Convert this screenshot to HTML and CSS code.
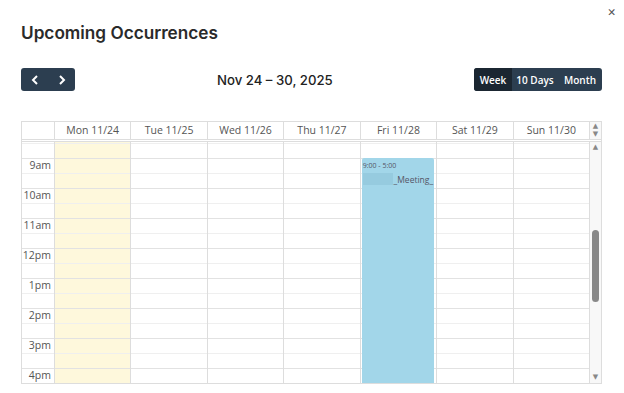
FILE: index.html
```html
<!DOCTYPE html>
<html>
<head lang="en">
    <meta charset="UTF-8">
    <title>Upcoming Occurrences</title>
    <link rel="stylesheet" href="styles.css">
</head>
<body>
    <div id="modal">
        <span id="close">&#x2715;</span>
        <h1 id="title">Upcoming Occurrences</h1>
        <div id="toolbar">
            <div class="btn-group">
                <span class="btn nav">
                    <svg width="8" height="10" viewBox="0 0 8 10"><path d="M6 1 L2 5 L6 9" fill="none" stroke="#fff" stroke-width="2"/></svg>
                </span>
                <span class="btn nav">
                    <svg width="8" height="10" viewBox="0 0 8 10"><path d="M2 1 L6 5 L2 9" fill="none" stroke="#fff" stroke-width="2"/></svg>
                </span>
            </div>
            <h2 id="range">Nov 24 &ndash; 30, 2025</h2>
            <div class="btn-group views">
                <span class="btn view active">Week</span>
                <span class="btn view">10 Days</span>
                <span class="btn view">Month</span>
            </div>
        </div>
        <div id="calendar">
            <div class="cal-head">
                <div class="head-cell"></div>
                <div class="head-cell">Mon 11/24</div>
                <div class="head-cell">Tue 11/25</div>
                <div class="head-cell">Wed 11/26</div>
                <div class="head-cell">Thu 11/27</div>
                <div class="head-cell">Fri 11/28</div>
                <div class="head-cell">Sat 11/29</div>
                <div class="head-cell">Sun 11/30</div>
                <div class="head-scroll">
                    <span class="arrow">&#9650;</span>
                    <span class="arrow">&#9660;</span>
                </div>
            </div>
            <div class="cal-body">
                <div class="col times">
                    <div class="time">9am</div>
                    <div class="time">10am</div>
                    <div class="time">11am</div>
                    <div class="time">12pm</div>
                    <div class="time">1pm</div>
                    <div class="time">2pm</div>
                    <div class="time">3pm</div>
                    <div class="time">4pm</div>
                </div>
                <div class="col day today"></div>
                <div class="col day"></div>
                <div class="col day"></div>
                <div class="col day"></div>
                <div class="col day">
                    <div class="event">
                        <div class="event-time">9:00 - 5:00</div>
                        <div class="event-title"><span class="blur"></span>_Meeting_</div>
                    </div>
                </div>
                <div class="col day"></div>
                <div class="col day"></div>
                <div class="scrollbar">
                    <span class="arrow">&#9650;</span>
                    <div class="track"><div class="thumb"></div></div>
                    <span class="arrow">&#9660;</span>
                </div>
            </div>
        </div>
    </div>
</body>
</html>
```

FILE: styles.css
```css
*{
    margin: 0;
    padding: 0;
    box-sizing: border-box;
}
body{
    background: #fff;
    font-family: "Inter", sans-serif;
    color: #222;
}
#modal{
    width: 624px;
    height: 393px;
    padding: 20px 22px 0 21px;
    position: relative;
    overflow: hidden;
}
#close{
    position: absolute;
    top: 6px;
    right: 8px;
    font-size: 10.5px;
    color: #555;
    font-family: "DejaVu Sans", sans-serif;
}
#title{
    font-size: 17.2px;
    line-height: 26px;
    font-weight: 600;
    color: #2a2a2a;
}
#toolbar{
    margin-top: 22px;
    display: flex;
    align-items: center;
    height: 23px;
}
.btn-group{
    display: flex;
    height: 23px;
    border-radius: 3px;
    overflow: hidden;
    background: #2c3e50;
}
.btn{
    color: #fff;
    display: flex;
    align-items: center;
    justify-content: center;
    cursor: pointer;
}
.btn.nav{
    width: 27px;
}
.views{
    margin-left: auto;
}
.btn.view{
    font-family: "Open Sans", sans-serif;
    font-size: 10px;
    font-weight: 600;
    white-space: nowrap;
}
.btn.view:nth-child(1){
    width: 38px;
}
.btn.view:nth-child(2){
    width: 46px;
}
.btn.view:nth-child(3){
    width: 44px;
}
.btn.view.active{
    background: #1b2631;
}
#range{
    font-size: 13.2px;
    font-weight: 500;
    color: #222;
    margin-left: 142px;
}
#calendar{
    margin-top: 30px;
    border: 1px solid #ddd;
    font-family: "Open Sans", sans-serif;
    color: #555;
}
.cal-head,.cal-body{
    display: grid;
    grid-template-columns: 32px repeat(7, 1fr) 12px;
}
.cal-head{
    height: 18px;
    border-bottom: 1px solid #ddd;
}
.head-cell{
    font-size: 10.5px;
    line-height: 17px;
    text-align: center;
    border-left: 1px solid #ddd;
}
.head-cell:first-child{
    border-left: none;
}
.head-scroll{
    display: flex;
    flex-direction: column;
    align-items: center;
    gap: 1px;
    padding-top: 1px;
    border-left: 1px solid #ddd;
    background: #f8f8f8;
}
.arrow{
    font-size: 7px;
    line-height: 7px;
    color: #888;
    font-family: "DejaVu Sans", sans-serif;
}
.cal-body{
    height: 242px;
    grid-template-rows: minmax(0, 1fr);
    margin-top: 1px;
    border-top: 1px solid #ddd;
    overflow: hidden;
}
.col{
    position: relative;
    overflow: hidden;
    border-left: 1px solid #ddd;
    background-image: linear-gradient(#e2e2e2 1px, transparent 1px), linear-gradient(#efefef 1px, transparent 1px);
    background-size: 100% 30px, 100% 30px;
    background-position: 0 16px, 0 31px;
}
.col.times{
    border-left: none;
    padding-top: 16px;
}
.time{
    height: 30px;
    font-size: 10.5px;
    line-height: 14px;
    text-align: right;
    padding-right: 3px;
}
.col.today{
    background-color: #fef8dc;
}
.event{
    position: absolute;
    top: 16px;
    left: 1px;
    right: 2px;
    bottom: 0;
    background: #a2d6e9;
    border-radius: 2px 2px 0 0;
    padding: 2px 1px;
    color: #556;
}
.event-time{
    font-size: 7px;
    line-height: 11px;
}
.event-title{
    display: flex;
    align-items: center;
    font-size: 8.5px;
    margin-top: 2px;
}
.blur{
    width: 32px;
    height: 12px;
    background: #96cbdf;
    margin-right: 1px;
}
.scrollbar{
    display: flex;
    flex-direction: column;
    align-items: center;
    border-left: 1px solid #ddd;
    background: #f8f8f8;
    padding: 2px 0 2px;
}
.track{
    flex: 1;
    width: 100%;
    padding-top: 79px;
    display: flex;
    justify-content: center;
}
.thumb{
    width: 7px;
    height: 72px;
    border-radius: 4px;
    background: #888;
}
```
